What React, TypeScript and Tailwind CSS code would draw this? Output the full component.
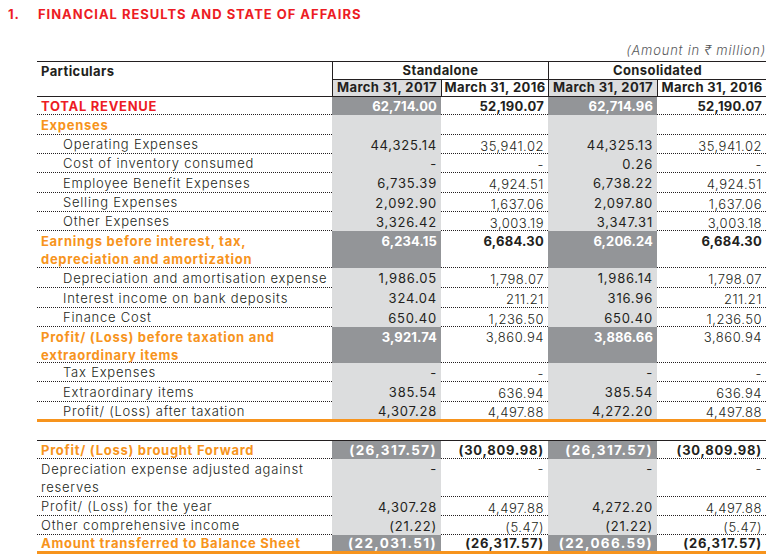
import React from "react";

type Kind = "red" | "orange" | "sub" | "plain";

type RowData = {
  label: React.ReactNode;
  kind: Kind;
  vals: string[];
  dark?: boolean;
  boldWhite?: boolean;
  wide?: boolean;
  h: string;
  noLine?: boolean;
  two?: boolean;
};

const labelCls: Record<Kind, string> = {
  red: "pl-[4px] font-bold tracking-[0.055em] text-[#ed1c24]",
  orange: "pl-[4px] font-bold tracking-[0.055em] text-[#f7941d]",
  sub: "pl-[26px] font-light tracking-[0.06em] text-[#231f20]",
  plain: "pl-[4px] font-light tracking-[0.06em] text-[#231f20]",
};

const top: RowData[] = [
  { label: "TOTAL REVENUE", kind: "red", vals: ["62,714.00", "52,190.07", "62,714.96", "52,190.07"], dark: true, boldWhite: true, h: "h-[18px]" },
  { label: "Expenses", kind: "orange", vals: ["", "", "", ""], h: "h-[20px]" },
  { label: "Operating Expenses", kind: "sub", vals: ["44,325.14", "35,941.02", "44,325.13", "35,941.02"], h: "h-[19px]" },
  { label: "Cost of inventory consumed", kind: "sub", vals: ["-", "-", "0.26", "-"], h: "h-[19px]" },
  { label: "Employee Benefit Expenses", kind: "sub", vals: ["6,735.39", "4,924.51", "6,738.22", "4,924.51"], h: "h-[20px]" },
  { label: "Selling Expenses", kind: "sub", vals: ["2,092.90", "1,637.06", "2,097.80", "1,637.06"], h: "h-[19px]" },
  { label: "Other Expenses", kind: "sub", vals: ["3,326.42", "3,003.19", "3,347.31", "3,003.18"], h: "h-[19px]" },
  {
    label: (
      <>
        Earnings before interest, tax,
        <br />
        depreciation and amortization
      </>
    ),
    kind: "orange",
    vals: ["6,234.15", "6,684.30", "6,206.24", "6,684.30"],
    dark: true,
    boldWhite: true,
    h: "h-[37px]",
    two: true,
  },
  { label: "Depreciation and amortisation expense", kind: "sub", vals: ["1,986.05", "1,798.07", "1,986.14", "1,798.07"], h: "h-[20px]" },
  { label: "Interest income on bank deposits", kind: "sub", vals: ["324.04", "211.21", "316.96", "211.21"], h: "h-[20px]" },
  { label: "Finance Cost", kind: "sub", vals: ["650.40", "1,236.50", "650.40", "1,236.50"], h: "h-[19px]" },
  {
    label: (
      <>
        Profit/ (Loss) before taxation and
        <br />
        extraordinary items
      </>
    ),
    kind: "orange",
    vals: ["3,921.74", "3,860.94", "3,886.66", "3,860.94"],
    dark: true,
    h: "h-[36px]",
    two: true,
  },
  { label: "Tax Expenses", kind: "sub", vals: ["-", "-", "-", "-"], h: "h-[19px]" },
  { label: "Extraordinary items", kind: "sub", vals: ["385.54", "636.94", "385.54", "636.94"], h: "h-[20px]" },
  { label: "Profit/ (Loss) after taxation", kind: "sub", vals: ["4,307.28", "4,497.88", "4,272.20", "4,497.88"], h: "h-[17px]", noLine: true },
];

const bottom: RowData[] = [
  { label: "Profit/ (Loss) brought Forward", kind: "orange", vals: ["(26,317.57)", "(30,809.98)", "(26,317.57)", "(30,809.98)"], dark: true, boldWhite: true, wide: true, h: "h-[18px]" },
  {
    label: (
      <>
        Depreciation expense adjusted against
        <br />
        reserves
      </>
    ),
    kind: "plain",
    vals: ["-", "-", "-", "-"],
    h: "h-[38px]",
    two: true,
  },
  { label: "Profit/ (Loss) for the year", kind: "plain", vals: ["4,307.28", "4,497.88", "4,272.20", "4,497.88"], h: "h-[19px]" },
  { label: "Other comprehensive income", kind: "plain", vals: ["(21.22)", "(5.47)", "(21.22)", "(5.47)"], h: "h-[19px]" },
  { label: "Amount transferred to Balance Sheet", kind: "orange", vals: ["(22,031.51)", "(26,317.57)", "(22,066.59)", "(26,317.57)"], dark: true, boldWhite: true, wide: true, h: "h-[16px]", noLine: true },
];

function Row({ r }: { r: RowData }) {
  const line = r.noLine ? "" : "border-b border-dotted border-[#231f20]";
  const align = r.two ? "items-start pt-[1px]" : "items-center";
  return (
    <>
      <div className={`flex ${align} ${r.h} ${line} ${labelCls[r.kind]} leading-[18px]`}>
        <span>{r.label}</span>
      </div>
      {r.vals.map((v, i) => {
        const grey = i % 2 === 0;
        let cls = "";
        if (grey) {
          if (r.dark) {
            cls = `bg-[#939598] text-white font-bold ${
              r.wide ? "text-[13.5px] tracking-[0.1em]" : "tracking-[0.01em]"
            }`;
          } else {
            cls = "bg-[#dcddde] text-[#231f20] font-normal tracking-[0.06em]";
          }
        } else {
          const weight = r.boldWhite
            ? r.wide
              ? "font-bold tracking-[0.06em]"
              : "font-bold tracking-[0.02em]"
            : "font-light tracking-[0.04em]";
          cls = `${line} text-[#231f20] ${weight} ${!r.dark && !r.two ? "pt-[3px]" : ""}`;
        }
        return (
          <div
            key={i}
            className={`flex ${align} justify-end pr-[4px] leading-[18px] ${r.h} ${cls}`}
          >
            {v}
          </div>
        );
      })}
    </>
  );
}

export default function App() {
  return (
    <div
      className="h-[559px] w-[780px] overflow-hidden bg-white text-[13px] text-[#231f20]"
      style={{ fontFamily: 'Inter, "DejaVu Sans", sans-serif' }}
    >
      <div className="flex pt-[6px] text-[13px] font-bold leading-[17px] tracking-[0.075em] text-[#ed1c24]">
        <span className="w-[38px] pl-[8px]">1.</span>
        <span>FINANCIAL RESULTS AND STATE OF AFFAIRS</span>
      </div>

      <div className="ml-[37px] mt-[19px] w-[729px] text-right text-[13px] font-light italic leading-[16px] tracking-[0.06em] text-[#58595b]">
        (Amount in ₹ million)
      </div>

      <div className="ml-[37px] mt-[3px] grid w-[729px] grid-cols-[295px_109px_107px_109px_109px] border-t border-[#231f20] tracking-[0.03em]">
        {/* header */}
        <div className="row-span-2 h-[34px] pl-[4px] pt-[1px] font-bold leading-[17px]">Particulars</div>
        <div className="col-span-2 flex h-[18px] items-center justify-center border-b border-l border-[#231f20] font-bold">
          Standalone
        </div>
        <div className="col-span-2 flex h-[18px] items-center justify-center border-b border-l border-[#231f20] font-bold">
          Consolidated
        </div>
        <div className="flex h-[16px] items-center justify-center border-l border-[#231f20] bg-[#dcddde] font-bold">
          March 31, 2017
        </div>
        <div className="flex h-[16px] items-center justify-center border-l border-[#231f20] font-bold">
          March 31, 2016
        </div>
        <div className="flex h-[16px] items-center justify-center border-l border-[#231f20] bg-[#dcddde] font-bold">
          March 31, 2017
        </div>
        <div className="flex h-[16px] items-center justify-center border-l border-[#231f20] font-bold">
          March 31, 2016
        </div>
        <div className="col-span-5 h-px bg-[#231f20]" />

        {top.map((r, i) => (
          <Row key={i} r={r} />
        ))}
        <div className="col-span-5 h-[3px] bg-[#f7941d]" />
        <div className="col-span-5 h-[18px]" />
        <div className="col-span-5 h-px bg-[#231f20]" />

        {bottom.map((r, i) => (
          <Row key={i} r={r} />
        ))}
        <div className="col-span-5 h-[3px] bg-[#f7941d]" />
      </div>
    </div>
  );
}
